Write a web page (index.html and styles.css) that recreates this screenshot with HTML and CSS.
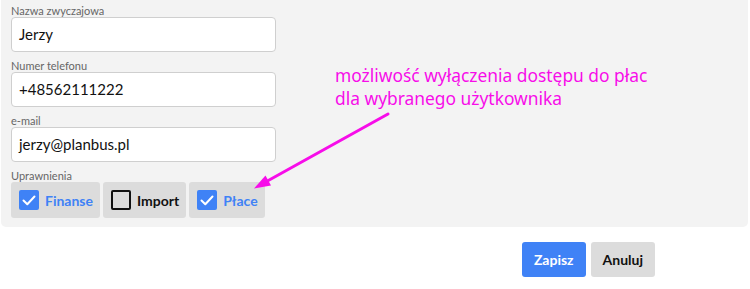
FILE: index.html
```html
<!DOCTYPE html>
<html lang="pl">
<head>
<meta charset="utf-8">
<link rel="stylesheet" href="styles.css">
</head>
<body>
<div class="panel">
  <div class="field">
    <label class="lbl">Nazwa zwyczajowa</label>
    <div class="input">Jerzy</div>
  </div>
  <div class="field">
    <label class="lbl">Numer telefonu</label>
    <div class="input">+48562111222</div>
  </div>
  <div class="field">
    <label class="lbl">e-mail</label>
    <div class="input">jerzy@planbus.pl</div>
  </div>
  <div class="field">
    <label class="lbl">Uprawnienia</label>
    <div class="perms">
      <div class="perm checked">
        <span class="box"><svg viewBox="0 0 20 20" width="20" height="20"><path d="M4.5 10.5 L8.3 14.2 L15.5 6.5" fill="none" stroke="#fff" stroke-width="2" stroke-linecap="round" stroke-linejoin="round"/></svg></span>
        <span class="ptext">Finanse</span>
      </div>
      <div class="perm">
        <span class="box empty"></span>
        <span class="ptext">Import</span>
      </div>
      <div class="perm checked">
        <span class="box"><svg viewBox="0 0 20 20" width="20" height="20"><path d="M4.5 10.5 L8.3 14.2 L15.5 6.5" fill="none" stroke="#fff" stroke-width="2" stroke-linecap="round" stroke-linejoin="round"/></svg></span>
        <span class="ptext">Płace</span>
      </div>
    </div>
  </div>
  <div class="note">możliwość wyłączenia dostępu do płac<br>dla wybranego użytkownika</div>
  <svg class="arrow" width="750" height="230" viewBox="0 0 750 230">
    <line x1="388" y1="114" x2="262" y2="184" stroke="#f70de9" stroke-width="3" stroke-linecap="round"/>
    <polygon points="254,188.5 265.5,175.5 271,185.5" fill="#f70de9"/>
  </svg>
</div>
<div class="actions">
  <button class="btn primary">Zapisz</button>
  <button class="btn">Anuluj</button>
</div>
</body>
</html>
```
FILE: styles.css
```css
html, body {
  margin: 0;
  padding: 0;
  background: #fff;
  font-family: Lato, "Liberation Sans", sans-serif;
}
.panel {
  position: relative;
  margin: 0 2px 0 1px;
  height: 227px;
  box-sizing: border-box;
  background: #f3f3f3;
  border-radius: 0 0 5px 5px;
  padding: 4px 0 0 10px;
}
.field {
  display: flex;
  flex-direction: column;
  margin-bottom: 7px;
}
.lbl {
  font-size: 11px;
  line-height: 13px;
  color: #666;
}
.input {
  width: 265px;
  height: 35px;
  box-sizing: border-box;
  background: #fff;
  border: 1px solid #cfcfcf;
  border-radius: 4px;
  padding: 0 7px;
  font-size: 15px;
  line-height: 33px;
  color: #111;
}
.perms {
  display: flex;
  gap: 3px;
}
.perm {
  display: flex;
  align-items: center;
  gap: 6px;
  height: 36px;
  padding: 0 7px 0 8px;
  background: #dcdcdc;
  border-radius: 3px;
  font-weight: bold;
  font-size: 14px;
  color: #111;
}
.perm.checked .ptext {
  color: #3f82f6;
}
.box {
  width: 20px;
  height: 20px;
  border-radius: 2px;
  background: #3f82f6;
  display: flex;
}
.box.empty {
  box-sizing: border-box;
  background: transparent;
  border: 2px solid #111;
}
.note {
  position: absolute;
  left: 334px;
  top: 64px;
  font-family: "Noto Sans", sans-serif;
  font-size: 17.4px;
  line-height: 23px;
  color: #f70de9;
}
.arrow {
  position: absolute;
  left: -1px;
  top: 0;
}
.actions {
  display: flex;
  justify-content: flex-end;
  gap: 5px;
  padding: 15px 95px 0 0;
}
.btn {
  height: 35px;
  padding: 0 12px;
  border: none;
  border-radius: 3px;
  background: #dcdcdc;
  color: #111;
  font-family: Lato, sans-serif;
  font-weight: bold;
  font-size: 14px;
}
.btn.primary {
  background: #3f82f6;
  color: #fff;
}
```
